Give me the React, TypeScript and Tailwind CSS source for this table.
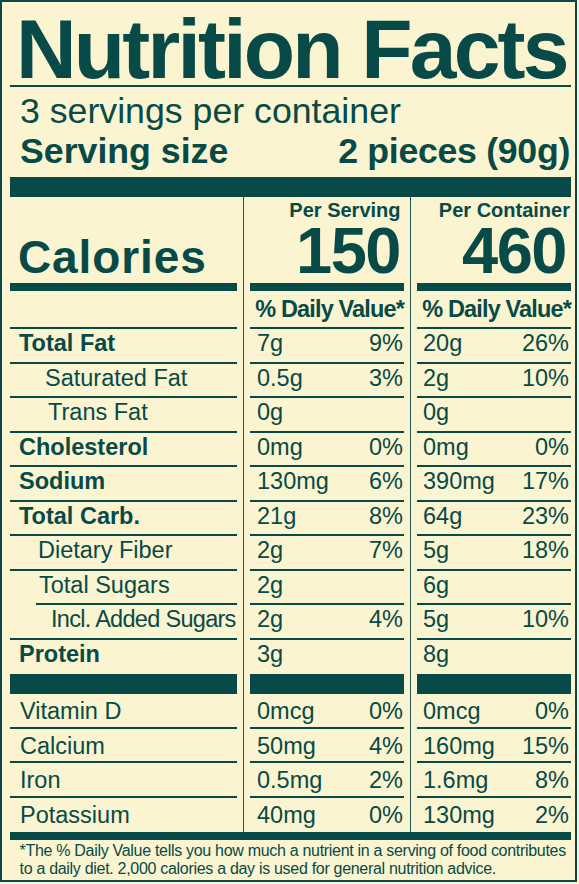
import React from "react";

type RowData = {
  label: string;
  bold?: boolean;
  indent: string;
  labelExtra?: string;
  v1: string;
  p1: string;
  v2: string;
  p2: string;
  line?: boolean;
  lineIndent?: boolean;
};

const upper: RowData[] = [
  { label: "Total Fat", bold: true, indent: "pl-[9px]", v1: "7g", p1: "9%", v2: "20g", p2: "26%", line: true },
  { label: "Saturated Fat", indent: "pl-[35px]", v1: "0.5g", p1: "3%", v2: "2g", p2: "10%", line: true },
  { label: "Trans Fat", indent: "pl-[38px]", v1: "0g", p1: "", v2: "0g", p2: "", line: true },
  { label: "Cholesterol", bold: true, indent: "pl-[9px]", v1: "0mg", p1: "0%", v2: "0mg", p2: "0%", line: true },
  { label: "Sodium", bold: true, indent: "pl-[9px]", v1: "130mg", p1: "6%", v2: "390mg", p2: "17%", line: true },
  { label: "Total Carb.", bold: true, indent: "pl-[9px]", v1: "21g", p1: "8%", v2: "64g", p2: "23%", line: true },
  { label: "Dietary Fiber", indent: "pl-[28px]", v1: "2g", p1: "7%", v2: "5g", p2: "18%", line: true },
  { label: "Total Sugars", indent: "pl-[29px]", v1: "2g", p1: "", v2: "6g", p2: "", line: true, lineIndent: true },
  { label: "Incl. Added Sugars", indent: "pl-[41px]", labelExtra: "tracking-[-0.7px]", v1: "2g", p1: "4%", v2: "5g", p2: "10%", line: true },
  { label: "Protein", bold: true, indent: "pl-[9px]", v1: "3g", p1: "", v2: "8g", p2: "", line: false },
];

const lower: RowData[] = [
  { label: "Vitamin D", indent: "pl-[10px]", v1: "0mcg", p1: "0%", v2: "0mcg", p2: "0%", line: true },
  { label: "Calcium", indent: "pl-[10px]", v1: "50mg", p1: "4%", v2: "160mg", p2: "15%", line: true },
  { label: "Iron", indent: "pl-[10px]", v1: "0.5mg", p1: "2%", v2: "1.6mg", p2: "8%", line: true },
  { label: "Potassium", indent: "pl-[10px]", v1: "40mg", p1: "0%", v2: "130mg", p2: "2%", line: false },
];

function Gutter() {
  return (
    <div className="w-[13px] shrink-0 flex justify-center">
      <div className="w-px bg-[#1f5a56]" />
    </div>
  );
}

function Line({ show, indent }: { show?: boolean; indent?: boolean }) {
  if (!show) return <div className="h-[2px]" />;
  return <div className={`h-[2px] bg-[#074a47] ${indent ? "ml-[26px]" : ""}`} />;
}

function Row({ r, low }: { r: RowData; low?: boolean }) {
  const textBox = low ? "h-[32.5px] pt-[3px] leading-[29.5px]" : "h-[32.5px] leading-[29.5px]";
  return (
    <div className="flex">
      <div className="w-[227px] shrink-0 flex flex-col">
        <div className={`${textBox} ${r.indent} ${r.bold ? "font-bold" : ""} ${r.labelExtra ?? ""} whitespace-nowrap`}>
          {r.label}
        </div>
        <Line show={r.line} indent={r.lineIndent} />
      </div>
      <Gutter />
      <div className="w-[154px] shrink-0 flex flex-col">
        <div className={`${textBox} flex justify-between pl-[7px] pr-[1px] whitespace-nowrap`}>
          <span>{r.v1}</span>
          <span>{r.p1}</span>
        </div>
        <Line show={r.line} />
      </div>
      <Gutter />
      <div className="w-[154px] shrink-0 flex flex-col">
        <div className={`${textBox} flex justify-between pl-[6px] pr-[2px] whitespace-nowrap`}>
          <span>{r.v2}</span>
          <span>{r.p2}</span>
        </div>
        <Line show={r.line} />
      </div>
    </div>
  );
}

function BarRow({ h }: { h: string }) {
  return (
    <div className="flex">
      <div className={`w-[227px] shrink-0 ${h} bg-[#074a47]`} />
      <Gutter />
      <div className={`w-[154px] shrink-0 ${h} bg-[#074a47]`} />
      <Gutter />
      <div className={`w-[154px] shrink-0 ${h} bg-[#074a47]`} />
    </div>
  );
}

export default function App() {
  return (
    <div className="w-[579px] h-[884px] bg-[#faf4d0] text-[#074a47] font-[family-name:'Liberation_Sans',Arial,sans-serif]">
      <div className="w-[577px] h-[882px] border-2 border-[#074a47] pl-[8px] pr-[4px] flex flex-col">
        <div className="h-[83px] shrink-0 pt-[11px] pl-[6px] text-[84px] leading-[72px] font-bold tracking-[-2.8px] whitespace-nowrap">
          Nutrition Facts
        </div>
        <div className="h-[2px] shrink-0 bg-[#074a47]" />
        <div className="h-[90px] shrink-0 pt-[5px] pl-[10px] pr-[1px] text-[35.7px] leading-[39px]">
          <div className="whitespace-nowrap">3 servings per container</div>
          <div className="mt-[1px] flex justify-between font-bold whitespace-nowrap">
            <span>Serving size</span>
            <span className="tracking-[-0.3px]">2 pieces (90g)</span>
          </div>
        </div>
        <div className="h-[20px] shrink-0 bg-[#074a47]" />
        <div className="flex h-[86px] shrink-0">
          <div className="w-[227px] shrink-0 flex items-end pl-[8px] pb-[3px]">
            <span className="text-[46px] leading-[46px] font-bold tracking-[0.9px]">Calories</span>
          </div>
          <Gutter />
          <div className="w-[154px] shrink-0 flex flex-col items-end font-bold">
            <div className="text-[20px] leading-[26px] pr-[3.5px] whitespace-nowrap">Per Serving</div>
            <div className="text-[65px] leading-[56px] pr-[4px] tracking-[-1.5px]">150</div>
          </div>
          <Gutter />
          <div className="w-[154px] shrink-0 flex flex-col items-end font-bold">
            <div className="text-[20px] leading-[26px] pr-[1px] whitespace-nowrap">Per Container</div>
            <div className="text-[65px] leading-[56px] pr-[5px] tracking-[-1.5px]">460</div>
          </div>
        </div>
        <BarRow h="h-[8px]" />
        <div className="flex text-[23.5px]">
          <div className="w-[227px] shrink-0 flex flex-col">
            <div className="h-[36px]" />
            <div className="h-[2px] bg-[#074a47]" />
          </div>
          <Gutter />
          <div className="w-[154px] shrink-0 flex flex-col">
            <div className="h-[36px] leading-[37px] text-right font-bold tracking-[-0.85px] whitespace-nowrap">% Daily Value*</div>
            <div className="h-[2px] bg-[#074a47]" />
          </div>
          <Gutter />
          <div className="w-[154px] shrink-0 flex flex-col">
            <div className="h-[36px] leading-[37px] text-right font-bold tracking-[-0.85px] whitespace-nowrap">% Daily Value*</div>
            <div className="h-[2px] bg-[#074a47]" />
          </div>
        </div>
        <div className="flex flex-col text-[23.5px]">
          {upper.map((r) => (
            <Row key={r.label} r={r} />
          ))}
        </div>
        <BarRow h="h-[20px]" />
        <div className="flex flex-col text-[23.5px]">
          {lower.map((r) => (
            <Row key={r.label} r={r} low />
          ))}
        </div>
        <div className="h-[8px] shrink-0 bg-[#074a47]" />
        <div className="pt-[1.5px] pl-[9.5px] text-[16px] leading-[18.4px] tracking-[-0.3px] whitespace-nowrap">
          *The % Daily Value tells you how much a nutrient in a serving of food contributes
          <br />
          to a daily diet. 2,000 calories a day is used for general nutrition advice.
        </div>
      </div>
    </div>
  );
}
